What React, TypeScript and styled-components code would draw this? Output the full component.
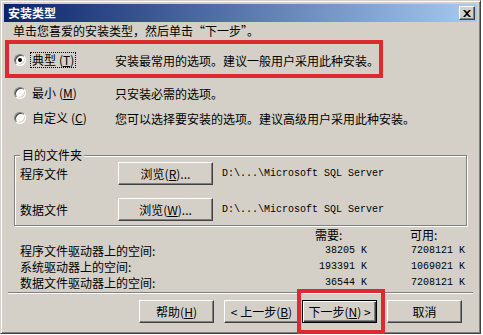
import React from 'react';
import styled, { createGlobalStyle, css } from 'styled-components';

const GlobalStyle = createGlobalStyle`
  html, body {
    margin: 0;
    padding: 0;
    background: #fff;
  }
  body {
    font-family: 'Noto Sans CJK SC', 'Liberation Sans', sans-serif;
    font-size: 12px;
    color: #000;
  }
`;

const Window = styled.div`
  box-sizing: border-box;
  width: 481px;
  height: 334px;
  background: #d4d0c8;
  border: 1px solid;
  border-color: #d4d0c8 #404040 #404040 #d4d0c8;
  box-shadow: inset 1px 1px 0 #fff, inset -1px -1px 0 #808080;
  padding: 3px;
  display: flex;
  flex-direction: column;
`;

const TitleBar = styled.div`
  height: 18px;
  flex: none;
  display: flex;
  align-items: center;
  justify-content: space-between;
  padding: 0 2px 0 4px;
  background: linear-gradient(to right, #0a246a, #a6caf0);
`;

const Title = styled.span`
  color: #fff;
  font-weight: 700;
  font-size: 12px;
  line-height: 18px;
`;

const CloseButton = styled.div`
  box-sizing: border-box;
  width: 16px;
  height: 14px;
  background: #d4d0c8;
  border: 1px solid;
  border-color: #fff #404040 #404040 #fff;
  box-shadow: inset -1px -1px 0 #808080;
  display: flex;
  align-items: center;
  justify-content: center;
`;

const Instruction = styled.div`
  height: 18px;
  line-height: 18px;
  padding-left: 9px;
`;

const Highlight = styled.div`
  box-sizing: border-box;
  width: 378px;
  margin-left: 1px;
  border: 4px solid #dc2a30;
  padding: 4px 0 2px;
`;

const OptionRow = styled.div<{ $inset: number; $gap?: number }>`
  display: flex;
  align-items: center;
  height: 24px;
  padding-left: ${(p) => p.$inset}px;
  margin-top: ${(p) => p.$gap ?? 0}px;
`;

const Choice = styled.div`
  width: 101px;
  flex: none;
  display: flex;
  align-items: center;
`;

const Radio = styled.span<{ $checked?: boolean }>`
  box-sizing: border-box;
  width: 12px;
  height: 12px;
  border-radius: 50%;
  background: #fff;
  border: 1px solid;
  border-color: #808080 #fff #fff #808080;
  box-shadow: inset 1px 1px 0 #404040, inset -1px -1px 0 #d4d0c8;
  display: flex;
  align-items: center;
  justify-content: center;
  margin-right: 4px;

  &::after {
    content: '';
    width: 4px;
    height: 4px;
    border-radius: 50%;
    background: ${(p) => (p.$checked ? '#000' : 'transparent')};
  }
`;

const ChoiceLabel = styled.span<{ $focused?: boolean }>`
  padding: 0 1px;
  line-height: 14px;
  border: 1px dotted ${(p) => (p.$focused ? '#000' : 'transparent')};
`;

const Key = styled.span`
  text-decoration: underline;
`;

const Paren = styled.span`
  margin-left: 3px;
`;

const GroupBox = styled.div`
  position: relative;
  box-sizing: border-box;
  width: 453px;
  height: 71px;
  margin: 25px 0 0 10px;
  border: 1px solid #808080;
  box-shadow: inset 1px 1px 0 #fff, 1px 1px 0 #fff;
  padding: 6px 5px 0;
  display: flex;
  flex-direction: column;
  gap: 14px;
`;

const Legend = styled.span`
  position: absolute;
  top: -9px;
  left: 5px;
  padding: 0 2px;
  line-height: 16px;
  background: #d4d0c8;
`;

const FolderRow = styled.div`
  display: flex;
  align-items: center;
  height: 22px;
`;

const FolderLabel = styled.span`
  width: 98px;
  flex: none;
`;

const Button = styled.button<{ $w?: number; $default?: boolean }>`
  box-sizing: border-box;
  width: ${(p) => p.$w ?? 75}px;
  height: 23px;
  flex: none;
  padding: 0;
  background: #d4d0c8;
  color: #000;
  font-family: 'Noto Sans CJK SC', 'Liberation Sans', sans-serif;
  font-size: 12px;
  border: 1px solid;
  border-color: #fff #404040 #404040 #fff;
  box-shadow: inset -1px -1px 0 #808080;
  ${(p) =>
    p.$default &&
    css`
      border-color: #000;
      box-shadow: inset 1px 1px 0 #fff, inset -1px -1px 0 #404040, inset -2px -2px 0 #808080;
    `}
`;

const PathText = styled.span`
  margin-left: 9px;
  font-family: 'Liberation Mono', monospace;
  font-size: 10px;
`;

const SpaceTable = styled.div`
  display: grid;
  grid-template-columns: 1fr 52px 55px;
  column-gap: 43px;
  grid-auto-rows: 16px;
  align-items: center;
  width: 445px;
  margin: 1px 0 0 16px;
`;

const HeadCell = styled.span`
  line-height: 16px;
  height: 16px;
  overflow: hidden;
`;

const Amount = styled.span`
  text-align: right;
  white-space: nowrap;
  line-height: 16px;
  font-family: 'Liberation Mono', monospace;
  font-size: 10px;
`;

const Separator = styled.div`
  height: 0;
  margin: 1px 4px 0;
  border-top: 1px solid #808080;
  border-bottom: 1px solid #fff;
`;

const ButtonRow = styled.div`
  display: flex;
  justify-content: flex-end;
  align-items: center;
  margin-top: 6px;
  padding-right: 15px;
`;

const Spacer = styled.span<{ $w: number }>`
  width: ${(p) => p.$w}px;
  flex: none;
`;

const ButtonHighlight = styled.div`
  border: 4px solid #dc2a30;
  padding: 7px 4px 7px 1px;
  margin: -11px 0 -11px -2px;
`;

const options = [
  { name: '典型', key: 'T', desc: '安装最常用的选项。建议一般用户采用此种安装。', checked: true },
  { name: '最小', key: 'M', desc: '只安装必需的选项。' },
  { name: '自定义', key: 'C', desc: '您可以选择要安装的选项。建议高级用户采用此种安装。' },
];

const space = [
  { label: '程序文件驱动器上的空间:', need: '38205 K', free: '7208121 K' },
  { label: '系统驱动器上的空间:', need: '193391 K', free: '1069021 K' },
  { label: '数据文件驱动器上的空间:', need: '36544 K', free: '7208121 K' },
];

const Option: React.FC<{ o: (typeof options)[number]; inset: number; gap?: number }> = ({ o, inset, gap }) => (
  <OptionRow $inset={inset} $gap={gap}>
    <Choice>
      <Radio $checked={o.checked} />
      <ChoiceLabel $focused={o.checked}>
        {o.name}
        <Paren>
          (<Key>{o.key}</Key>)
        </Paren>
      </ChoiceLabel>
    </Choice>
    <span>{o.desc}</span>
  </OptionRow>
);

const App: React.FC = () => {
  return (
    <>
      <GlobalStyle />
      <Window>
        <TitleBar>
          <Title>安装类型</Title>
          <CloseButton>
            <svg width="8" height="7" viewBox="0 0 8 7">
              <path d="M0 0h2l2 2 2-2h2L5 3.5 8 7H6L4 5 2 7H0l3-3.5z" fill="#000" />
            </svg>
          </CloseButton>
        </TitleBar>

        <Instruction>单击您喜爱的安装类型，然后单击“下一步”。</Instruction>

        <Highlight>
          <Option o={options[0]} inset={5} />
        </Highlight>
        <Option o={options[1]} inset={10} gap={3} />
        <Option o={options[2]} inset={10} gap={1} />

        <GroupBox>
          <Legend>目的文件夹</Legend>
          <FolderRow>
            <FolderLabel>程序文件</FolderLabel>
            <Button $w={95}>
              浏览(<Key>R</Key>)...
            </Button>
            <PathText>D:\...\Microsoft SQL Server</PathText>
          </FolderRow>
          <FolderRow>
            <FolderLabel>数据文件</FolderLabel>
            <Button $w={95}>
              浏览(<Key>W</Key>)...
            </Button>
            <PathText>D:\...\Microsoft SQL Server</PathText>
          </FolderRow>
        </GroupBox>

        <SpaceTable>
          <span />
          <HeadCell>需要:</HeadCell>
          <HeadCell>可用:</HeadCell>
          {space.map((r) => (
            <React.Fragment key={r.label}>
              <HeadCell>{r.label}</HeadCell>
              <Amount>{r.need}</Amount>
              <Amount>{r.free}</Amount>
            </React.Fragment>
          ))}
        </SpaceTable>

        <Separator />

        <ButtonRow>
          <Button>
            帮助(<Key>H</Key>)
          </Button>
          <Spacer $w={10} />
          <Button>
            &lt; 上一步(<Key>B</Key>)
          </Button>
          <ButtonHighlight>
            <Button $default>
              下一步(<Key>N</Key>) &gt;
            </Button>
          </ButtonHighlight>
          <Spacer $w={2} />
          <Button>取消</Button>
        </ButtonRow>
      </Window>
    </>
  );
};

export default App;
